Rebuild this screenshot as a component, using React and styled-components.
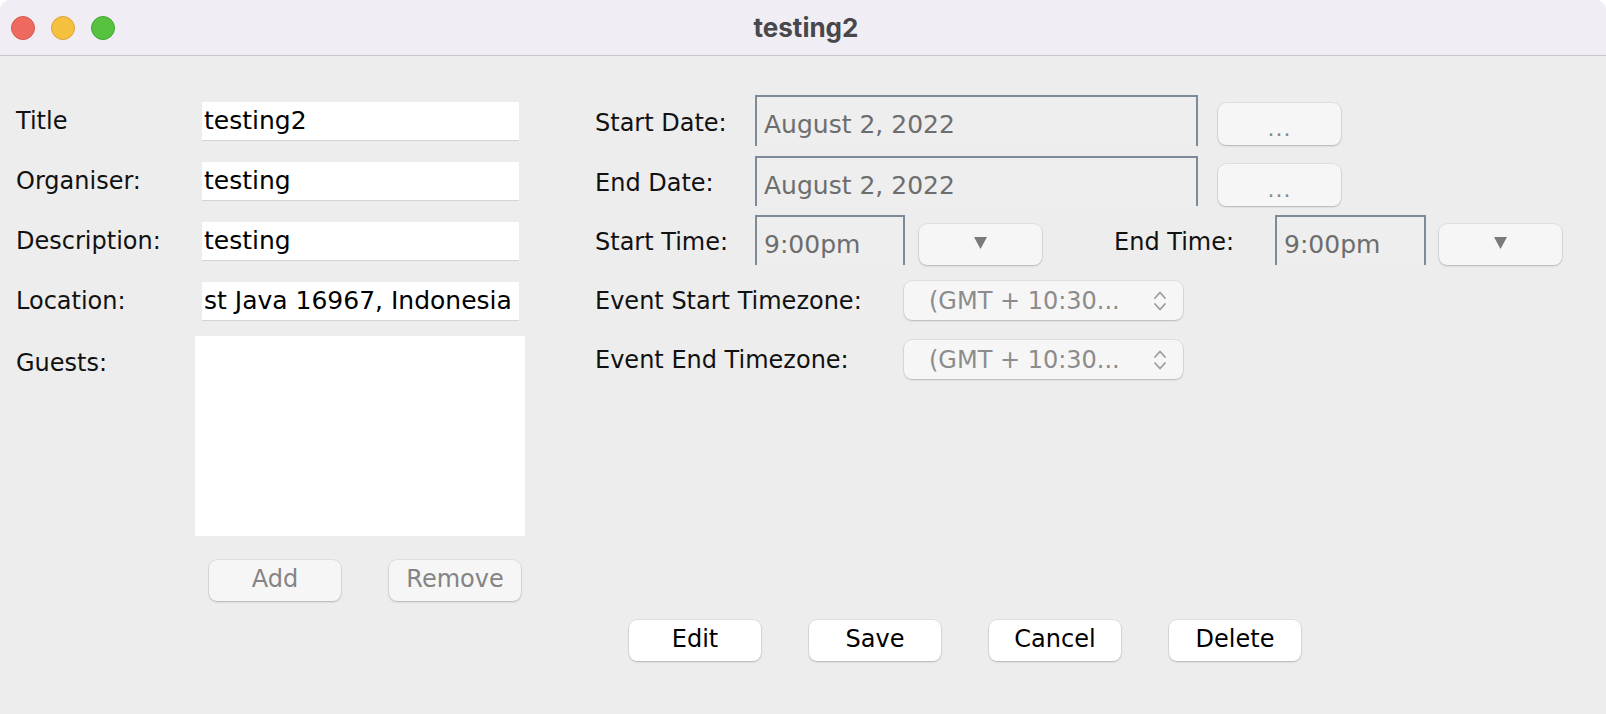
import React from "react";
import styled, { createGlobalStyle } from "styled-components";

const GlobalStyle = createGlobalStyle`
  html, body {
    margin: 0;
    padding: 0;
    background: #ffffff;
  }
  * {
    box-sizing: border-box;
  }
`;

const Window = styled.div`
  width: 1606px;
  height: 714px;
  background: #ededed;
  border-radius: 10px 10px 0 0;
  overflow: hidden;
  font-family: "DejaVu Sans", "Liberation Sans", sans-serif;
  color: #111;
`;

const TitleBar = styled.div`
  height: 56px;
  background: #f0eef4;
  border-bottom: 1px solid #c9c9c9;
  display: grid;
  grid-template-columns: 1fr auto 1fr;
  align-items: center;
`;

const Lights = styled.div`
  display: flex;
  gap: 16px;
  padding-left: 11px;
`;

const Light = styled.span`
  width: 24px;
  height: 24px;
  border-radius: 50%;
  background: ${(p) => p.$fill};
  border: 1px solid ${(p) => p.$edge};
`;

const WindowTitle = styled.div`
  font-family: Inter, "Liberation Sans", sans-serif;
  font-weight: 700;
  font-size: 26px;
  color: #48474c;
  padding-left: 6px;
`;

const Content = styled.div`
  display: flex;
  align-items: flex-start;
  padding-left: 16px;
`;

/* ---------- left column ---------- */

const LeftColumn = styled.div`
  width: 509px;
  padding-top: 46px;
  display: flex;
  flex-direction: column;
`;

const FieldRow = styled.div`
  display: grid;
  grid-template-columns: 186px 317px;
  align-items: center;
  height: 38px;
  margin-bottom: ${(p) => p.$gap ?? 22}px;
`;

const Label = styled.div`
  font-size: 24px;
  color: #111;
  white-space: nowrap;
`;

const TextField = styled.div`
  height: 38px;
  background: #ffffff;
  box-shadow: 0 1px 0 #d4d4d4;
  font-size: 25px;
  line-height: 38px;
  padding-left: 2px;
  color: #000;
  white-space: nowrap;
  overflow: hidden;
`;

const GuestsRow = styled.div`
  display: grid;
  grid-template-columns: 179px 330px;
  align-items: start;
`;

const GuestsLabel = styled(Label)`
  padding-top: 13px;
`;

const GuestList = styled.div`
  height: 200px;
  background: #ffffff;
`;

const ListButtons = styled.div`
  display: flex;
  gap: 48px;
  padding-left: 193px;
  margin-top: 24px;
`;

const Button = styled.button`
  width: 132px;
  height: ${(p) => p.$h ?? 41}px;
  border: none;
  border-radius: 8px;
  font-family: "DejaVu Sans", "Liberation Sans", sans-serif;
  font-size: 24px;
  padding: 0 0 3px;
  background: ${(p) => (p.disabled ? "#f6f6f6" : "#ffffff")};
  color: ${(p) => (p.disabled ? "#848484" : "#000000")};
  box-shadow: 0 0 0 0.5px rgba(0, 0, 0, 0.1), 0 1px 2px rgba(0, 0, 0, 0.2);
  display: flex;
  align-items: center;
  justify-content: center;
`;

/* ---------- right column ---------- */

const RightColumn = styled.div`
  margin-left: 70px;
  padding-top: 39px;
  display: flex;
  flex-direction: column;
`;

const Row = styled.div`
  display: flex;
  align-items: flex-start;
  height: ${(p) => p.$h}px;
  margin-bottom: ${(p) => p.$gap ?? 0}px;
`;

const RowLabel = styled(Label)`
  width: ${(p) => p.$w}px;
  height: ${(p) => p.$h}px;
  line-height: ${(p) => p.$h + (p.$shift ?? 5)}px;
  flex: none;
`;

const ClipBox = styled.div`
  width: ${(p) => p.$w}px;
  height: ${(p) => p.$h}px;
  overflow: hidden;
  flex: none;
`;

const FormattedField = styled.div`
  height: 62px;
  border: 2px solid #7d8a9a;
  background: #eeeeee;
  font-size: 25px;
  line-height: 55px;
  padding-left: 7px;
  color: #6d6d6d;
  white-space: nowrap;
`;

const SideButton = styled(Button)`
  width: 123px;
  margin-left: ${(p) => p.$ml}px;
  margin-top: ${(p) => p.$mt ?? 8}px;
  flex: none;
`;

const Dots = styled.span`
  font-size: 22px;
  color: #8a8a8a;
  padding-top: 12px;
  letter-spacing: 1px;
`;

const Combo = styled.div`
  width: 279px;
  height: 39px;
  border-radius: 8px;
  background: #f6f6f6;
  box-shadow: 0 0 0 0.5px rgba(0, 0, 0, 0.1), 0 1px 2px rgba(0, 0, 0, 0.18);
  display: flex;
  align-items: center;
  justify-content: space-between;
  padding: 0 16px 0 25px;
  font-size: 24px;
  color: #8c8c8c;
  white-space: nowrap;
`;

const ActionBar = styled.div`
  display: flex;
  gap: 48px;
  padding-left: 34px;
  margin-top: 241px;
`;

const Triangle = () => (
  <svg width="13" height="12" viewBox="0 0 13 12">
    <polygon points="0,0 13,0 6.5,12" fill="#7a7a7a" />
  </svg>
);

const UpDown = () => (
  <svg width="14" height="24" viewBox="0 0 14 24">
    <polyline points="2,9 7,3.5 12,9" fill="none" stroke="#9d9d9d" strokeWidth="1.8" strokeLinecap="round" strokeLinejoin="round" />
    <polyline points="2,15 7,20.5 12,15" fill="none" stroke="#9d9d9d" strokeWidth="1.8" strokeLinecap="round" strokeLinejoin="round" />
  </svg>
);

const leftFields = [
  { label: "Title", value: "testing2" },
  { label: "Organiser:", value: "testing" },
  { label: "Description:", value: "testing" },
  { label: "Location:", value: "st Java 16967, Indonesia", gap: 16 },
];

export default function App() {
  return (
    <>
      <GlobalStyle />
      <Window>
        <TitleBar>
          <Lights>
            <Light $fill="#ee6a5f" $edge="#d6584d" />
            <Light $fill="#f6c03f" $edge="#d9a33a" />
            <Light $fill="#57c23f" $edge="#46a634" />
          </Lights>
          <WindowTitle>testing2</WindowTitle>
          <div />
        </TitleBar>

        <Content>
          <LeftColumn>
            {leftFields.map((f) => (
              <FieldRow key={f.label} $gap={f.gap}>
                <Label>{f.label}</Label>
                <TextField>{f.value}</TextField>
              </FieldRow>
            ))}
            <GuestsRow>
              <GuestsLabel>Guests:</GuestsLabel>
              <GuestList />
            </GuestsRow>
            <ListButtons>
              <Button disabled>Add</Button>
              <Button disabled>Remove</Button>
            </ListButtons>
          </LeftColumn>

          <RightColumn>
            <Row $h={51} $gap={10}>
              <RowLabel $w={160} $h={51}>Start Date:</RowLabel>
              <ClipBox $w={443} $h={51}>
                <FormattedField>August 2, 2022</FormattedField>
              </ClipBox>
              <SideButton disabled $ml={20} $h={42}>
                <Dots>...</Dots>
              </SideButton>
            </Row>
            <Row $h={50} $gap={9}>
              <RowLabel $w={160} $h={50}>End Date:</RowLabel>
              <ClipBox $w={443} $h={50}>
                <FormattedField>August 2, 2022</FormattedField>
              </ClipBox>
              <SideButton disabled $ml={20} $h={42}>
                <Dots>...</Dots>
              </SideButton>
            </Row>
            <Row $h={50} $gap={16}>
              <RowLabel $w={160} $h={50}>Start Time:</RowLabel>
              <ClipBox $w={150} $h={50}>
                <FormattedField>9:00pm</FormattedField>
              </ClipBox>
              <SideButton disabled $ml={14} $mt={9}>
                <Triangle />
              </SideButton>
              <RowLabel $w={161} $h={50} style={{ marginLeft: 72 }}>
                End Time:
              </RowLabel>
              <ClipBox $w={151} $h={50}>
                <FormattedField>9:00pm</FormattedField>
              </ClipBox>
              <SideButton disabled $ml={13} $mt={9}>
                <Triangle />
              </SideButton>
            </Row>
            <Row $h={39} $gap={20}>
              <RowLabel $w={309} $h={39} $shift={2}>Event Start Timezone:</RowLabel>
              <Combo>
                <span>(GMT + 10:30...</span>
                <UpDown />
              </Combo>
            </Row>
            <Row $h={39}>
              <RowLabel $w={309} $h={39} $shift={2}>Event End Timezone:</RowLabel>
              <Combo>
                <span>(GMT + 10:30...</span>
                <UpDown />
              </Combo>
            </Row>
            <ActionBar>
              <Button>Edit</Button>
              <Button>Save</Button>
              <Button>Cancel</Button>
              <Button>Delete</Button>
            </ActionBar>
          </RightColumn>
        </Content>
      </Window>
    </>
  );
}
